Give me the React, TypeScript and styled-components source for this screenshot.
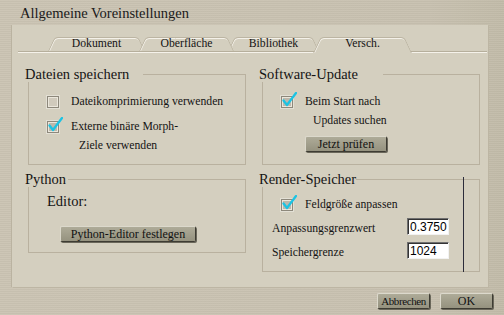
import styled, { createGlobalStyle, css } from "styled-components";

const GlobalStyle = createGlobalStyle`
  html, body {
    margin: 0;
    padding: 0;
  }
  body {
    width: 504px;
    height: 315px;
    overflow: hidden;
    font-family: "Liberation Serif", "Times New Roman", serif;
    color: #141414;
  }
`;

const tabs = [
  { label: "Dokument", w: 97, z: 1 },
  { label: "Oberfläche", w: 95, z: 3 },
  { label: "Bibliothek", w: 91, z: 2 },
  { label: "Versch.", w: 99, z: 4, active: true },
];

function CheckMark() {
  return (
    <Tick viewBox="0 0 16 16" width="16" height="16">
      <path d="M2.5 8.5 L6 13 L15 1" fill="none" stroke="#1cc3e3" strokeWidth="2.3" strokeLinecap="round" strokeLinejoin="round" />
    </Tick>
  );
}

function Check({ checked }: { checked?: boolean }) {
  return <Box $checked={checked}>{checked && <CheckMark />}</Box>;
}

export default function App() {
  return (
    <>
      <GlobalStyle />
      <Window>
        <TitleBar>Allgemeine Voreinstellungen</TitleBar>
        <Panel>
          <TabStrip>
            {tabs.map((t) => (
              <Tab key={t.label} $w={t.w} $z={t.z} $active={t.active}>
                {t.label}
              </Tab>
            ))}
          </TabStrip>

          <Groups>
            <Group $h={99}>
              <Legend $gap={14}>Dateien speichern</Legend>
              <Body>
                <CheckRow>
                  <Check />
                  <Label>Dateikomprimierung verwenden</Label>
                </CheckRow>
                <CheckRow>
                  <Check checked />
                  <Label>
                    Externe binäre Morph-
                    <br />
                    Ziele verwenden
                  </Label>
                </CheckRow>
              </Body>
            </Group>

            <Group $h={99}>
              <Legend $gap={25}>Software-Update</Legend>
              <Body>
                <CheckRow>
                  <Check checked />
                  <Label>
                    Beim Start nach
                    <br />
                    Updates suchen
                  </Label>
                </CheckRow>
                <Button $w={82} $left={24} $top={5}>Jetzt prüfen</Button>
              </Body>
            </Group>

            <Group $h={82}>
              <Legend $gap={2}>Python</Legend>
              <Body $top={5}>
                <Editor>Editor:</Editor>
                <Button $w={136} $left={13} $top={15}>Python-Editor festlegen</Button>
              </Body>
            </Group>

            <Group $h={101}>
              <Legend $gap={0}>Render-Speicher</Legend>
              <Body $top={8}>
                <CheckRow>
                  <Check checked />
                  <Label>Feldgröße anpassen</Label>
                </CheckRow>
                <Fields>
                  <FieldRow>
                    <FieldLabel>Anpassungsgrenzwert</FieldLabel>
                    <Field readOnly value="0.3750" />
                  </FieldRow>
                  <FieldRow>
                    <FieldLabel>Speichergrenze</FieldLabel>
                    <Field readOnly value="1024" />
                  </FieldRow>
                </Fields>
                <VLine />
              </Body>
            </Group>
          </Groups>
        </Panel>
        <Footer>
          <Button $w={53} $small>Abbrechen</Button>
          <Button $w={53}>OK</Button>
        </Footer>
      </Window>
    </>
  );
}

const Window = styled.div`
  width: 504px;
  height: 315px;
  display: flex;
  flex-direction: column;
  background:
    repeating-linear-gradient(0deg, rgba(255, 255, 255, 0.04) 0 1px, rgba(0, 0, 0, 0.025) 1px 2px),
    linear-gradient(90deg, #cbc4b3 0, #c8c1b0 85%, #c2bba9 100%);
`;

const TitleBar = styled.div`
  height: 25px;
  box-sizing: border-box;
  padding: 1px 0 0 20px;
  font-size: 14.5px;
  line-height: 24px;
  color: #1a1a1a;
`;

const Panel = styled.div`
  margin-left: 12px;
  width: 476px;
  height: 262px;
  background: #d4cfbf;
  box-shadow: -1px 0 0 #bab3a1, 1px 1px 0 #bdb6a4;
  display: flex;
  flex-direction: column;
`;

const TabStrip = styled.div`
  margin: 12px 1px 0 6px;
  padding-left: 30px;
  height: 14px;
  display: flex;
  align-items: flex-end;
  border-bottom: 1px solid #b6af9c;
  box-shadow: 0 1px 0 #f5f2ea;
`;

const Tab = styled.div<{ $w: number; $z: number; $active?: boolean }>`
  position: relative;
  z-index: ${(p) => p.$z};
  width: ${(p) => p.$w}px;
  height: 14px;
  margin-left: -6px;
  display: flex;
  align-items: center;
  justify-content: center;
  font-size: 11.7px;
  line-height: 14px;
  &:first-child {
    margin-left: 0;
  }
  ${(p) =>
    p.$active &&
    css`
      height: 16px;
      margin-bottom: -2px;
      padding-bottom: 2px;
      box-sizing: border-box;
    `}
  &::before,
  &::after {
    content: "";
    position: absolute;
    top: 0;
    bottom: 0;
    width: 55%;
    background: #d4cfbf;
    border-top: 1px solid #bcb5a3;
    z-index: -1;
  }
  &::before {
    left: 0;
    border-left: 1px solid #bcb5a3;
    border-top-left-radius: 4px;
    transform: skewX(-25deg);
    transform-origin: bottom left;
    box-shadow: inset 1px 1px 0 #f4f1e9;
  }
  &::after {
    right: 0;
    border-right: 1px solid #bcb5a3;
    border-top-right-radius: 4px;
    transform: skewX(25deg);
    transform-origin: bottom right;
    box-shadow: inset 0 1px 0 #f4f1e9;
  }
`;

const Groups = styled.div`
  margin: 14px 0 0 16px;
  display: grid;
  grid-template-columns: 218px 218px;
  column-gap: 16px;
  row-gap: 6px;
  align-items: start;
`;

const Group = styled.fieldset<{ $h: number }>`
  margin: 0;
  padding: 0;
  min-width: 0;
  box-sizing: border-box;
  height: ${(p) => p.$h}px;
  border: 1px solid #b9b19f;
`;

const Legend = styled.legend<{ $gap: number }>`
  margin-left: -4px;
  padding: 0 ${(p) => p.$gap}px 0 0;
  font-size: 14.5px;
  line-height: 16px;
  color: #141414;
`;

const Body = styled.div<{ $top?: number }>`
  position: relative;
  padding: ${(p) => p.$top ?? 10}px 0 0 18px;
`;

const CheckRow = styled.div`
  display: flex;
  align-items: flex-start;
  gap: 12px;
  margin-bottom: 6px;
`;

const Box = styled.span<{ $checked?: boolean }>`
  position: relative;
  flex: none;
  width: 12px;
  height: 12px;
  margin-top: 3.5px;
  box-sizing: border-box;
  border: 1px solid #8d887b;
  background: ${(p) => (p.$checked ? "#bdb8ab" : "#d0cabc")};
  box-shadow: inset 0 0 0 1px #ebe7dc, 0 0 0 1px rgba(255, 255, 255, 0.35);
`;

const Tick = styled.svg`
  position: absolute;
  left: -1px;
  top: -5px;
`;

const Label = styled.span`
  font-size: 11.7px;
  line-height: 19px;
  padding-left: 8px;
  text-indent: -8px;
`;

const Editor = styled.div`
  font-size: 14.5px;
  line-height: 19px;
`;

const Button = styled.button<{ $w: number; $left?: number; $top?: number; $small?: boolean }>`
  display: block;
  width: ${(p) => p.$w}px;
  height: 16px;
  margin: ${(p) => p.$top ?? 0}px 0 0 ${(p) => p.$left ?? 0}px;
  padding: 0;
  box-sizing: border-box;
  font-family: "Liberation Serif", "Times New Roman", serif;
  font-size: ${(p) => (p.$small ? "11px" : "12px")};
  letter-spacing: ${(p) => (p.$small ? "-0.4px" : "0")};
  line-height: 14px;
  color: #111;
  background: linear-gradient(#aeab98, #95927f);
  border: 1px solid;
  border-color: #dcd9cc #3e3c33 #3e3c33 #dcd9cc;
  border-radius: 2px;
  box-shadow: 1px 1px 0 #6a675a;
`;

const Fields = styled.div`
  margin: -3px 0 0 -9px;
`;

const FieldRow = styled.div`
  display: grid;
  grid-template-columns: 135px 42px;
  height: 24px;
`;

const FieldLabel = styled.span`
  font-size: 11.7px;
  line-height: 24px;
`;

const Field = styled.input`
  width: 42px;
  height: 17px;
  margin-top: 1px;
  box-sizing: border-box;
  padding: 0 0 0 2px;
  font-family: "Liberation Sans", Arial, sans-serif;
  font-size: 12px;
  color: #000;
  background: #fff;
  border: 1px solid;
  border-color: #6f6f6f #f2f2f2 #f2f2f2 #6f6f6f;
  box-shadow: inset 1px 1px 0 #333;
  outline: none;
`;

const VLine = styled.div`
  position: absolute;
  top: -10px;
  right: 15px;
  width: 1px;
  height: 95px;
  background: #2c2c3a;
`;

const Footer = styled.div`
  display: flex;
  justify-content: flex-end;
  gap: 10px;
  padding: 6px 11px 0 0;
`;
